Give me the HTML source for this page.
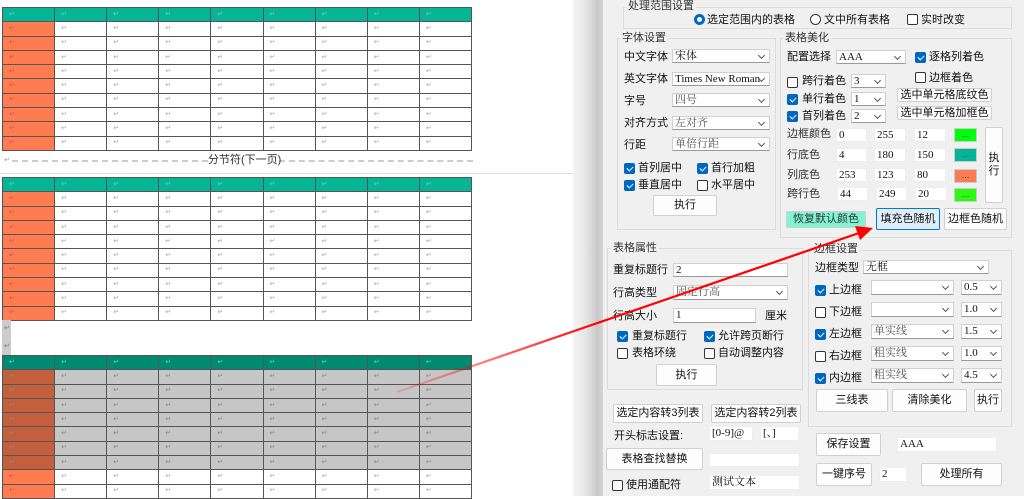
<!DOCTYPE html>
<html><head><meta charset="utf-8">
<style>
*{box-sizing:border-box;margin:0;padding:0}
body{width:1024px;height:496px;overflow:hidden;position:relative;background:#fff;font-family:"Liberation Sans","Noto Sans CJK SC",sans-serif;font-size:11px;color:#111}
.page{position:absolute;left:0;top:0;width:573px;height:496px;background:#fff}
.shadow{position:absolute;left:573px;top:0;width:31px;height:496px;background:linear-gradient(90deg,#f4f4f4,#e6e6e6 40%,#c8c8c8 80%,#d8d8d8)}
.panel{position:absolute;left:603px;top:0;width:421px;height:496px;background:#f0f0f0}
table.w{position:absolute;left:2px;border-collapse:collapse;table-layout:fixed;width:470px}
table.w td{border:1px solid #555;height:14.3px;padding:0 0 0 6px;font-size:7px;color:#aaa;line-height:10px}
table.w td::after{content:"↵"}
table.w tr td:first-child{background:#ff7b50;color:#c56}
table.w tr.h td{background:#06b496;color:#6cc}
table.w tr.s td{background:#c6c6c6;color:#888}
table.w tr.s td:first-child{background:#c45f3e}
table.w tr.hs td{background:#008a70}
.a{position:absolute;white-space:nowrap;line-height:14px}
.g{position:absolute;border:1px solid #dcdcdc}
.gl{position:absolute;background:#f0f0f0;color:#333;padding:0 2px;line-height:12px;white-space:nowrap}
.in{position:absolute;background:#fff;border:1px solid #d0d0d0;border-bottom:1px solid #999;font-family:"Liberation Serif","Noto Serif CJK SC",serif;font-size:11px;line-height:12px;padding-left:2px;white-space:nowrap;overflow:hidden}
.cb::after{content:"";position:absolute;right:5px;top:3px;width:4px;height:4px;border-right:1px solid #555;border-bottom:1px solid #555;transform:rotate(45deg)}
.bt{position:absolute;background:#fdfdfd;border:1px solid #d0d0d0;text-align:center;white-space:nowrap;border-radius:2px}
.ck{position:absolute;width:11px;height:11px;border:1px solid #333;border-radius:2px;background:#fff}
.ck.on{background:#0067c0;border-color:#0067c0}
.ck.on::after{content:"";position:absolute;left:3px;top:1px;width:3px;height:5px;border-right:1px solid #fff;border-bottom:1px solid #fff;transform:rotate(45deg)}
.clr{position:absolute;width:23px;height:14px;border:1px solid #ccc;font-size:9px;text-align:center;line-height:10px;color:#333}
</style></head><body>
<div class="page">
<div class="a" style="left:4px;top:-9px;font-size:7px;color:#999">↵</div>
<table class="w" style="top:7px">
<tr class="h"><td></td><td></td><td></td><td></td><td></td><td></td><td></td><td></td><td></td></tr>
<tr><td></td><td></td><td></td><td></td><td></td><td></td><td></td><td></td><td></td></tr>
<tr><td></td><td></td><td></td><td></td><td></td><td></td><td></td><td></td><td></td></tr>
<tr><td></td><td></td><td></td><td></td><td></td><td></td><td></td><td></td><td></td></tr>
<tr><td></td><td></td><td></td><td></td><td></td><td></td><td></td><td></td><td></td></tr>
<tr><td></td><td></td><td></td><td></td><td></td><td></td><td></td><td></td><td></td></tr>
<tr><td></td><td></td><td></td><td></td><td></td><td></td><td></td><td></td><td></td></tr>
<tr><td></td><td></td><td></td><td></td><td></td><td></td><td></td><td></td><td></td></tr>
<tr><td></td><td></td><td></td><td></td><td></td><td></td><td></td><td></td><td></td></tr>
<tr><td></td><td></td><td></td><td></td><td></td><td></td><td></td><td></td><td></td></tr>
</table>
<div class="a" style="left:4px;top:154px;font-size:7px;color:#999">↵</div>
<div style="position:absolute;left:12px;top:160px;width:196px;border-top:2px dashed #ccc"></div>
<div style="position:absolute;left:279px;top:160px;width:194px;border-top:2px dashed #ccc"></div>
<div class="a" style="left:208px;top:153px;font-size:11px;color:#333">分节符(下一页)</div>
<div style="position:absolute;left:0;top:173px;width:573px;border-top:1px solid #ddd"></div>
<table class="w" style="top:177px">
<tr class="h"><td></td><td></td><td></td><td></td><td></td><td></td><td></td><td></td><td></td></tr>
<tr><td></td><td></td><td></td><td></td><td></td><td></td><td></td><td></td><td></td></tr>
<tr><td></td><td></td><td></td><td></td><td></td><td></td><td></td><td></td><td></td></tr>
<tr><td></td><td></td><td></td><td></td><td></td><td></td><td></td><td></td><td></td></tr>
<tr><td></td><td></td><td></td><td></td><td></td><td></td><td></td><td></td><td></td></tr>
<tr><td></td><td></td><td></td><td></td><td></td><td></td><td></td><td></td><td></td></tr>
<tr><td></td><td></td><td></td><td></td><td></td><td></td><td></td><td></td><td></td></tr>
<tr><td></td><td></td><td></td><td></td><td></td><td></td><td></td><td></td><td></td></tr>
<tr><td></td><td></td><td></td><td></td><td></td><td></td><td></td><td></td><td></td></tr>
<tr><td></td><td></td><td></td><td></td><td></td><td></td><td></td><td></td><td></td></tr>
</table>
<div style="position:absolute;left:2px;top:320px;width:9px;height:35px;background:#ccc"></div>
<div class="a" style="left:4px;top:322px;font-size:7px;color:#777">↵</div>
<div class="a" style="left:4px;top:340px;font-size:7px;color:#777">↵</div>
<table class="w" style="top:355px">
<tr class="h hs"><td></td><td></td><td></td><td></td><td></td><td></td><td></td><td></td><td></td></tr>
<tr class="s"><td></td><td></td><td></td><td></td><td></td><td></td><td></td><td></td><td></td></tr>
<tr class="s"><td></td><td></td><td></td><td></td><td></td><td></td><td></td><td></td><td></td></tr>
<tr class="s"><td></td><td></td><td></td><td></td><td></td><td></td><td></td><td></td><td></td></tr>
<tr class="s"><td></td><td></td><td></td><td></td><td></td><td></td><td></td><td></td><td></td></tr>
<tr class="s"><td></td><td></td><td></td><td></td><td></td><td></td><td></td><td></td><td></td></tr>
<tr class="s"><td></td><td></td><td></td><td></td><td></td><td></td><td></td><td></td><td></td></tr>
<tr class="s"><td></td><td></td><td></td><td></td><td></td><td></td><td></td><td></td><td></td></tr>
<tr><td></td><td></td><td></td><td></td><td></td><td></td><td></td><td></td><td></td></tr>
<tr><td></td><td></td><td></td><td></td><td></td><td></td><td></td><td></td><td></td></tr>
</table>
</div>
<div class="shadow"></div>
<div class="panel"></div>

<!-- 处理范围设置 -->
<div class="g" style="left:623px;top:7px;width:389px;height:22px"></div>
<div class="gl" style="left:626px;top:0px">处理范围设置</div>
<div style="position:absolute;left:694px;top:14px;width:11px;height:11px;border-radius:50%;background:#0067c0"><div style="position:absolute;left:3px;top:3px;width:5px;height:5px;border-radius:50%;background:#fff"></div></div>
<div class="a" style="left:707px;top:13px">选定范围内的表格</div>
<div style="position:absolute;left:810px;top:14px;width:11px;height:11px;border-radius:50%;border:1px solid #333;background:#fff"></div>
<div class="a" style="left:824px;top:13px">文中所有表格</div>
<div class="ck" style="left:907px;top:14px"></div>
<div class="a" style="left:921px;top:13px">实时改变</div>

<!-- 字体设置 -->
<div class="g" style="left:617px;top:38px;width:159px;height:192px"></div>
<div class="gl" style="left:620px;top:32px">字体设置</div>
<div class="a" style="left:624px;top:50px">中文字体</div><div class="in cb" style="left:672px;top:49px;width:98px;height:14px">宋体</div>
<div class="a" style="left:624px;top:72px">英文字体</div><div class="in cb" style="left:672px;top:72px;width:98px;height:14px">Times New Roman</div>
<div class="a" style="left:624px;top:94px">字号</div><div class="in cb" style="left:672px;top:93px;width:98px;height:14px;color:#555">四号</div>
<div class="a" style="left:624px;top:116px">对齐方式</div><div class="in cb" style="left:672px;top:116px;width:98px;height:14px;color:#555">左对齐</div>
<div class="a" style="left:624px;top:138px">行距</div><div class="in cb" style="left:672px;top:137px;width:98px;height:14px;color:#555">单倍行距</div>
<div class="ck on" style="left:624px;top:163px"></div><div class="a" style="left:638px;top:161px">首列居中</div>
<div class="ck on" style="left:697px;top:163px"></div><div class="a" style="left:711px;top:161px">首行加粗</div>
<div class="ck on" style="left:624px;top:180px"></div><div class="a" style="left:638px;top:178px">垂直居中</div>
<div class="ck" style="left:697px;top:180px"></div><div class="a" style="left:711px;top:178px">水平居中</div>
<div class="bt" style="left:653px;top:195px;width:64px;height:21px;line-height:19px">执行</div>

<!-- 表格美化 -->
<div class="g" style="left:780px;top:38px;width:232px;height:200px"></div>
<div class="gl" style="left:783px;top:32px">表格美化</div>
<div class="a" style="left:787px;top:50px">配置选择</div><div class="in cb" style="left:836px;top:50px;width:70px;height:14px">AAA</div>
<div class="ck on" style="left:915px;top:52px"></div><div class="a" style="left:929px;top:50px">逐格列着色</div>
<div class="ck" style="left:787px;top:77px"></div><div class="a" style="left:802px;top:74px">跨行着色</div><div class="in cb" style="left:851px;top:74px;width:35px;height:14px">3</div>
<div class="ck" style="left:915px;top:72px"></div><div class="a" style="left:929px;top:71px">边框着色</div>
<div class="bt" style="left:897px;top:88px;width:95px;height:14px;line-height:12px">选中单元格底纹色</div>
<div class="ck on" style="left:787px;top:94px"></div><div class="a" style="left:802px;top:92px">单行着色</div><div class="in cb" style="left:851px;top:92px;width:35px;height:14px">1</div>
<div class="ck on" style="left:787px;top:111px"></div><div class="a" style="left:802px;top:109px">首列着色</div><div class="in cb" style="left:851px;top:109px;width:35px;height:14px">2</div>
<div class="bt" style="left:897px;top:106px;width:95px;height:14px;line-height:12px">选中单元格加框色</div>
<div class="a" style="left:787px;top:127px;color:#333">边框颜色</div>
<div class="in" style="left:836px;top:128px;width:31px;height:14px;border-color:#eee">0</div><div class="in" style="left:874px;top:128px;width:32px;height:14px;border-color:#eee">255</div><div class="in" style="left:914px;top:128px;width:32px;height:14px;border-color:#eee">12</div>
<div class="clr" style="left:954px;top:128px;background:#00ff0c">...</div>
<div class="a" style="left:787px;top:148px;color:#333">行底色</div>
<div class="in" style="left:836px;top:148px;width:31px;height:14px;border-color:#eee">4</div><div class="in" style="left:874px;top:148px;width:32px;height:14px;border-color:#eee">180</div><div class="in" style="left:914px;top:148px;width:32px;height:14px;border-color:#eee">150</div>
<div class="clr" style="left:954px;top:148px;background:#04b496">...</div>
<div class="a" style="left:787px;top:168px;color:#333">列底色</div>
<div class="in" style="left:836px;top:168px;width:31px;height:14px;border-color:#eee">253</div><div class="in" style="left:874px;top:168px;width:32px;height:14px;border-color:#eee">123</div><div class="in" style="left:914px;top:168px;width:32px;height:14px;border-color:#eee">80</div>
<div class="clr" style="left:954px;top:169px;background:#fd7b50">...</div>
<div class="a" style="left:787px;top:187px;color:#333">跨行色</div>
<div class="in" style="left:837px;top:187px;width:31px;height:14px;border-color:#eee">44</div><div class="in" style="left:876px;top:187px;width:31px;height:14px;border-color:#eee">249</div><div class="in" style="left:915px;top:187px;width:32px;height:14px;border-color:#eee">20</div>
<div class="clr" style="left:954px;top:188px;background:#2cf914">...</div>
<div class="bt" style="left:985px;top:127px;width:18px;height:76px;line-height:13px;padding-top:24px;white-space:normal">执<br>行</div>
<div class="bt" style="left:786px;top:211px;width:80px;height:17px;line-height:15px;background:#80f5d0;color:#333">恢复默认颜色</div>
<div class="bt" style="left:876px;top:208px;width:64px;height:22px;line-height:20px;background:#e0eef9;border-color:#0078d7">填充色随机</div>
<div class="bt" style="left:944px;top:208px;width:63px;height:22px;line-height:20px">边框色随机</div>

<!-- 表格属性 -->
<div class="g" style="left:607px;top:248px;width:196px;height:142px"></div>
<div class="gl" style="left:611px;top:242px">表格属性</div>
<div class="a" style="left:613px;top:263px">重复标题行</div><div class="in" style="left:673px;top:263px;width:115px;height:14px">2</div>
<div class="a" style="left:613px;top:286px">行高类型</div><div class="in cb" style="left:673px;top:285px;width:115px;height:15px;color:#555">固定行高</div>
<div class="a" style="left:613px;top:309px">行高大小</div><div class="in" style="left:673px;top:308px;width:83px;height:15px">1</div>
<div class="a" style="left:765px;top:309px">厘米</div>
<div class="ck on" style="left:617px;top:331px"></div><div class="a" style="left:632px;top:329px">重复标题行</div>
<div class="ck on" style="left:704px;top:331px"></div><div class="a" style="left:718px;top:329px">允许跨页断行</div>
<div class="ck" style="left:617px;top:348px"></div><div class="a" style="left:632px;top:346px">表格环绕</div>
<div class="ck" style="left:704px;top:348px"></div><div class="a" style="left:718px;top:346px">自动调整内容</div>
<div class="bt" style="left:656px;top:364px;width:61px;height:22px;line-height:20px">执行</div>

<!-- 边框设置 -->
<div class="g" style="left:808px;top:250px;width:204px;height:177px"></div>
<div class="gl" style="left:812px;top:243px">边框设置</div>
<div class="a" style="left:815px;top:261px">边框类型</div><div class="in cb" style="left:863px;top:260px;width:126px;height:14px">无框</div>
<div class="ck on" style="left:815px;top:285px"></div><div class="a" style="left:829px;top:283px">上边框</div><div class="in cb" style="left:871px;top:280px;width:83px;height:15px"></div><div class="in cb" style="left:961px;top:280px;width:41px;height:15px">0.5</div>
<div class="ck" style="left:815px;top:307px"></div><div class="a" style="left:829px;top:305px">下边框</div><div class="in cb" style="left:871px;top:302px;width:83px;height:15px"></div><div class="in cb" style="left:961px;top:302px;width:41px;height:15px">1.0</div>
<div class="ck on" style="left:815px;top:329px"></div><div class="a" style="left:829px;top:327px">左边框</div><div class="in cb" style="left:871px;top:324px;width:83px;height:15px;color:#555">单实线</div><div class="in cb" style="left:961px;top:324px;width:41px;height:15px">1.5</div>
<div class="ck" style="left:815px;top:351px"></div><div class="a" style="left:829px;top:349px">右边框</div><div class="in cb" style="left:871px;top:346px;width:83px;height:15px;color:#555">粗实线</div><div class="in cb" style="left:961px;top:346px;width:41px;height:15px">1.0</div>
<div class="ck on" style="left:815px;top:373px"></div><div class="a" style="left:829px;top:371px">内边框</div><div class="in cb" style="left:871px;top:368px;width:83px;height:15px;color:#555">粗实线</div><div class="in cb" style="left:961px;top:368px;width:41px;height:15px">4.5</div>
<div class="bt" style="left:816px;top:389px;width:72px;height:23px;line-height:21px">三线表</div>
<div class="bt" style="left:892px;top:389px;width:75px;height:23px;line-height:21px">清除美化</div>
<div class="bt" style="left:974px;top:389px;width:28px;height:23px;line-height:21px">执行</div>

<!-- bottom left -->
<div class="bt" style="left:613px;top:404px;width:90px;height:19px;line-height:17px">选定内容转3列表</div>
<div class="bt" style="left:711px;top:404px;width:90px;height:19px;line-height:17px">选定内容转2列表</div>
<div class="a" style="left:614px;top:429px">开头标志设置:</div>
<div class="in" style="left:709px;top:426px;width:44px;height:15px;border-color:#eee">[0-9]@</div>
<div class="in" style="left:760px;top:426px;width:39px;height:15px;border-color:#eee">[、]</div>
<div class="bt" style="left:606px;top:448px;width:97px;height:22px;line-height:20px">表格查找替换</div>
<div class="in" style="left:709px;top:453px;width:91px;height:14px;border-color:#eee"></div>
<div class="ck" style="left:612px;top:480px"></div><div class="a" style="left:626px;top:478px">使用通配符</div>
<div class="in" style="left:709px;top:475px;width:91px;height:15px;border-color:#eee">测试文本</div>

<!-- bottom right -->
<div class="bt" style="left:816px;top:433px;width:65px;height:23px;line-height:21px">保存设置</div>
<div class="in" style="left:897px;top:437px;width:100px;height:15px;border-color:#eee">AAA</div>
<div class="bt" style="left:816px;top:463px;width:56px;height:23px;line-height:21px">一键序号</div>
<div class="in" style="left:879px;top:467px;width:28px;height:15px;border-color:#eee">2</div>
<div class="bt" style="left:921px;top:463px;width:81px;height:23px;line-height:21px">处理所有</div>

<svg style="position:absolute;left:0;top:0" width="1024" height="496">
<defs><linearGradient id="lg" gradientUnits="userSpaceOnUse" x1="397" y1="392" x2="600" y2="322"><stop offset="0" stop-color="#ff0000" stop-opacity="0.15"/><stop offset="1" stop-color="#ff0000"/></linearGradient></defs>
<line x1="397" y1="392" x2="862" y2="232" stroke="url(#lg)" stroke-width="2.2"/>
<polygon points="873,228 855,226 860,240" fill="#f00"/>
</svg>
</body></html>
